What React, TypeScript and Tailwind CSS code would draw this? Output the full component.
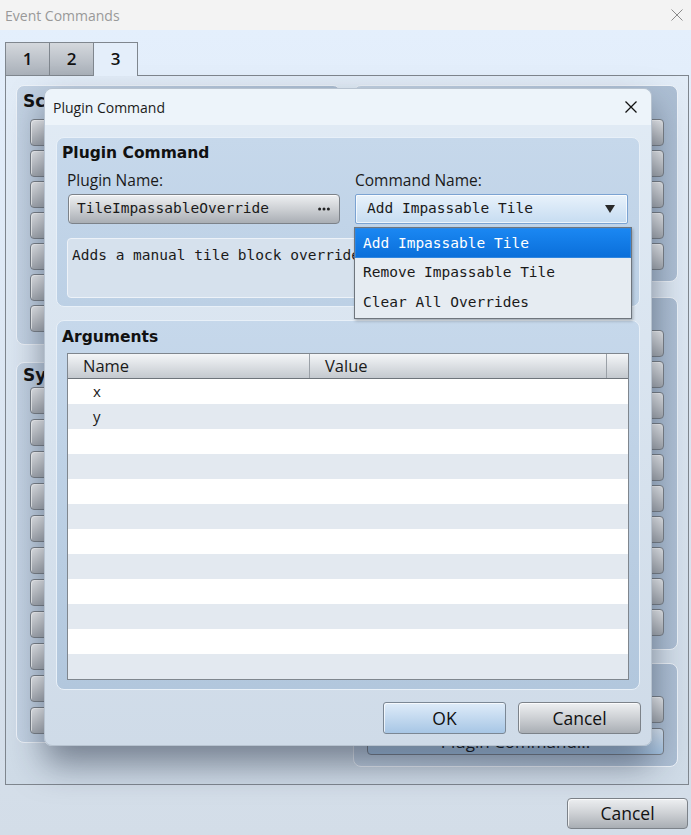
import React from "react";

const UI = "font-['Open_Sans','Noto_Sans',sans-serif]";
const MONO = "font-['DejaVu_Sans_Mono','Liberation_Mono',monospace]";
const BOLD = "font-['DejaVu_Sans','Liberation_Sans',sans-serif] font-bold";

const GrayButton: React.FC<{ className?: string; children?: React.ReactNode }> = ({
  className = "",
  children,
}) => (
  <div
    className={`flex shrink-0 items-center justify-center rounded-[4px] border border-[#7c8289] bg-linear-to-b from-[#eef0f2] via-[#cdd0d4] to-[#a9aeb4] shadow-[inset_1px_1px_0_rgba(255,255,255,0.75)] ${className}`}
  >
    {children}
  </div>
);

// group boxes of the window behind the dialog; titles are cut where the dialog covers them
const BgGroup: React.FC<{ title: string; className?: string; children?: React.ReactNode }> = ({
  title,
  className = "",
  children,
}) => (
  <div
    className={`flex flex-col rounded-[8px] border border-[#eef3f9] bg-linear-to-r from-[#c3d2e3] to-[#adbfd4] px-[13px] ${className}`}
  >
    <div
      className={`${BOLD} -ml-[7px] h-[24px] w-[21px] overflow-hidden whitespace-nowrap text-[17px] leading-[24px] text-[#111]`}
    >
      {title}
    </div>
    {children}
  </div>
);

const buttons = (n: number, gap: string) => (
  <div className={`flex flex-col ${gap}`}>
    {Array.from({ length: n }).map((_, i) => (
      <GrayButton key={i} className="h-[27px]" />
    ))}
  </div>
);

const CloseIcon: React.FC<{ className?: string; color: string; width?: number }> = ({
  className = "",
  color,
  width = 1.2,
}) => (
  <svg viewBox="0 0 12 12" className={className} fill="none" stroke={color} strokeWidth={width}>
    <path d="M0.5 0.5 L11.5 11.5 M11.5 0.5 L0.5 11.5" />
  </svg>
);

const args = ["x", "y"];

const PluginDialog: React.FC = () => {
  return (
    <div
      className={`${UI} absolute left-[44px] top-[88px] flex h-[658px] w-[608px] flex-col rounded-[8px] border border-[#b7c3d0] bg-linear-to-b from-[#e1ebf5] to-[#cfdbe8] shadow-[0_18px_34px_rgba(25,35,55,0.5)]`}
    >
      <div className="flex h-[36px] items-center justify-between rounded-t-[8px] bg-[#edf4fa] pl-[8px] pr-[14px]">
        <span className="text-[14px] text-[#1b1b1b]">Plugin Command</span>
        <CloseIcon className="h-[12px] w-[12px]" color="#111" width={1.3} />
      </div>

      <div className="flex flex-1 flex-col px-[11px] pt-[12px]">
        {/* plugin command group */}
        <div className="h-[170px] rounded-[8px] border border-[#e8f0f8] bg-linear-to-b from-[#c6d8eb] to-[#bcd0e5] pl-[10px] pr-[11px] pt-[4px]">
          <div className={`${BOLD} -ml-[5px] h-[22px] text-[15.5px] leading-[22px] text-[#111]`}>
            Plugin Command
          </div>
          <div className="mt-[6px] grid grid-cols-2 gap-x-[15px]">
            <div className="h-[20px] text-[15.5px] leading-[20px] text-[#1a1a1a]">Plugin Name:</div>
            <div className="h-[20px] text-[15.5px] leading-[20px] text-[#1a1a1a]">Command Name:</div>
            <GrayButton className="mt-[4px] ml-[1px] h-[30px] justify-between! rounded-[3px] pl-[8px] pr-[9px]">
              <span className={`${MONO} text-[14.5px] text-[#1a1a1a]`}>TileImpassableOverride</span>
              <svg viewBox="0 0 12 4" className="h-[4px] w-[12px]" fill="#222">
                <circle cx="1.6" cy="2" r="1.5" />
                <circle cx="6" cy="2" r="1.5" />
                <circle cx="10.4" cy="2" r="1.5" />
              </svg>
            </GrayButton>
            <div className="mt-[4px] flex h-[30px] items-center justify-between rounded-[2px] border border-[#7ba3d2] bg-linear-to-b from-[#e8f2fb] to-[#c6dcf1] pl-[11px] pr-[12px] shadow-[inset_0_0_0_1px_rgba(255,255,255,0.7)]">
              <span className={`${MONO} text-[14.5px] text-[#1a1a1a]`}>Add Impassable Tile</span>
              <svg viewBox="0 0 10 8" className="h-[8px] w-[10px]" fill="#2a2a2a">
                <path d="M0 0 H10 L5 8 Z" />
              </svg>
            </div>
          </div>
          <div className="mt-[14px] h-[60px] rounded-[4px] border border-[#edf2f8] bg-[#d6e1ed] pl-[4px] pt-[6px]">
            <div className={`${MONO} w-[282px] overflow-hidden whitespace-nowrap text-[14.5px] text-[#1a1a1a]`}>
              Adds a manual tile block override at a map position.
            </div>
          </div>
        </div>

        {/* arguments group */}
        <div className="mt-[13px] h-[370px] rounded-[8px] border border-[#e8f0f8] bg-linear-to-b from-[#c6d8eb] to-[#b2c7dd] pl-[10px] pr-[10px] pt-[5px]">
          <div className={`${BOLD} -ml-[5px] h-[22px] text-[15.5px] leading-[22px] text-[#111]`}>Arguments</div>
          <div className="mt-[5px] h-[327px] overflow-hidden border border-[#7f868e] bg-white">
            <div className="flex h-[25px] border-b border-[#6e747b] bg-linear-to-b from-[#f4f6f8] to-[#c4c9cf] text-[16.5px] leading-[24px] text-[#1a1a1a]">
              <div className="w-[242px] border-r border-[#9aa0a7] pl-[15px]">Name</div>
              <div className="w-[297px] border-r border-[#9aa0a7] pl-[15px]">Value</div>
              <div className="flex-1" />
            </div>
            {Array.from({ length: 12 }).map((_, i) => (
              <div
                key={i}
                className={`h-[25px] pl-[25px] text-[15px] leading-[25px] text-[#1a1a1a] ${
                  i % 2 === 0 ? "bg-white" : "bg-[#e3e9f0]"
                }`}
              >
                {args[i] ?? ""}
              </div>
            ))}
          </div>
        </div>

        <div className="mt-[12px] -mr-[1px] flex justify-end gap-[12px]">
          <div className="flex h-[32px] w-[123px] items-center justify-center rounded-[3px] border border-[#7b8794] bg-linear-to-b from-[#dfecf9] to-[#a7c6e5] text-[17.5px] text-[#111] shadow-[inset_1px_1px_0_rgba(255,255,255,0.7)]">
            OK
          </div>
          <GrayButton className="h-[32px] w-[123px] rounded-[3px] text-[17.5px] text-[#111]">Cancel</GrayButton>
        </div>
      </div>

      {/* open command list */}
      <div className="absolute left-[309px] top-[138px] w-[278px] border border-[#6f767e] bg-[#e6ecf2] shadow-[1px_2px_3px_rgba(0,0,0,0.25)]">
        {["Add Impassable Tile", "Remove Impassable Tile", "Clear All Overrides"].map((item, i) => (
          <div
            key={item}
            className={`${MONO} h-[30px] text-[14.5px] leading-[29px] ${
              i === 0
                ? "border border-[#2f86e0] bg-linear-to-b from-[#1a87f2] to-[#0a6fda] pl-[7px] text-white"
                : "pl-[8px] text-[#1a1a1a]"
            }`}
          >
            {item}
          </div>
        ))}
      </div>
    </div>
  );
};

export default function App() {
  return (
    <div className={`${UI} relative flex h-[835px] w-[691px] flex-col overflow-hidden bg-[#dfe9f4]`}>
      <div className="flex h-[30px] shrink-0 items-center justify-between bg-[#f3f3f3] pl-[5px] pr-[8px]">
        <span className="text-[14px] text-[#999]">Event Commands</span>
        <CloseIcon className="h-[12px] w-[12px]" color="#8a8a8a" width={1} />
      </div>

      <div className="flex flex-1 flex-col bg-linear-to-b from-[#e4effc] to-[#d3dde8] pl-[5px] pr-[2px] pt-[12px]">
        <div className="flex h-[33px] items-end">
          {["1", "2"].map((t, i) => (
            <div
              key={t}
              className={`flex h-[33px] w-[45px] items-center justify-center border border-b-0 border-[#7f868e] bg-linear-to-b from-[#d4d8dd] to-[#a9b0b9] text-[17px] font-semibold text-[#111] ${
                i > 0 ? "-ml-px" : ""
              }`}
            >
              {t}
            </div>
          ))}
          <div className="relative z-10 -mb-px -ml-px flex h-[34px] w-[45px] items-center justify-center border border-b-0 border-[#7f868e] bg-[#e4eefa] pb-px text-[17px] font-semibold text-[#111]">
            3
          </div>
        </div>

        <div className="grid h-[710px] grid-cols-2 gap-x-[12px] border border-[#7f868e] bg-linear-to-b from-[#e2ecf7] to-[#cfdbe7] px-[10px] pt-[9px]">
          <div className="flex flex-col">
            <BgGroup title="Scene Control" className="h-[260px] pt-[3px]">
              <div className="mt-[6px]">{buttons(7, "gap-[4px]")}</div>
            </BgGroup>
            <BgGroup title="System Settings" className="mt-[17px] h-[381px] pt-[0px]">
              <div>{buttons(11, "gap-[5px]")}</div>
            </BgGroup>
          </div>
          <div className="flex flex-col">
            <BgGroup title="" className="h-[197px] pt-[3px]">
              <div className="mt-[6px]">{buttons(5, "gap-[4px]")}</div>
            </BgGroup>
            <BgGroup title="" className="mt-[15px] h-[353px] pt-[3px]">
              <div className="mt-[5px]">{buttons(10, "gap-[4px]")}</div>
            </BgGroup>
            <BgGroup title="" className="mt-[13px] h-[104px] pt-[3px]">
              <div className="mt-[5px] flex flex-col gap-[5px]">
                <GrayButton className="h-[27px]" />
                <div className="flex h-[27px] items-center justify-center rounded-[4px] border border-[#7c8289] bg-linear-to-b from-[#dfecf9] to-[#a7c6e5] text-[17px] text-[#111]">
                  Plugin Command...
                </div>
              </div>
            </BgGroup>
          </div>
        </div>

        <div className="mt-[13px] flex justify-end pr-[1px]">
          <GrayButton className="h-[31px] w-[121px] rounded-[3px] text-[17.5px] text-[#111]">Cancel</GrayButton>
        </div>
      </div>

      <PluginDialog />
    </div>
  );
}
